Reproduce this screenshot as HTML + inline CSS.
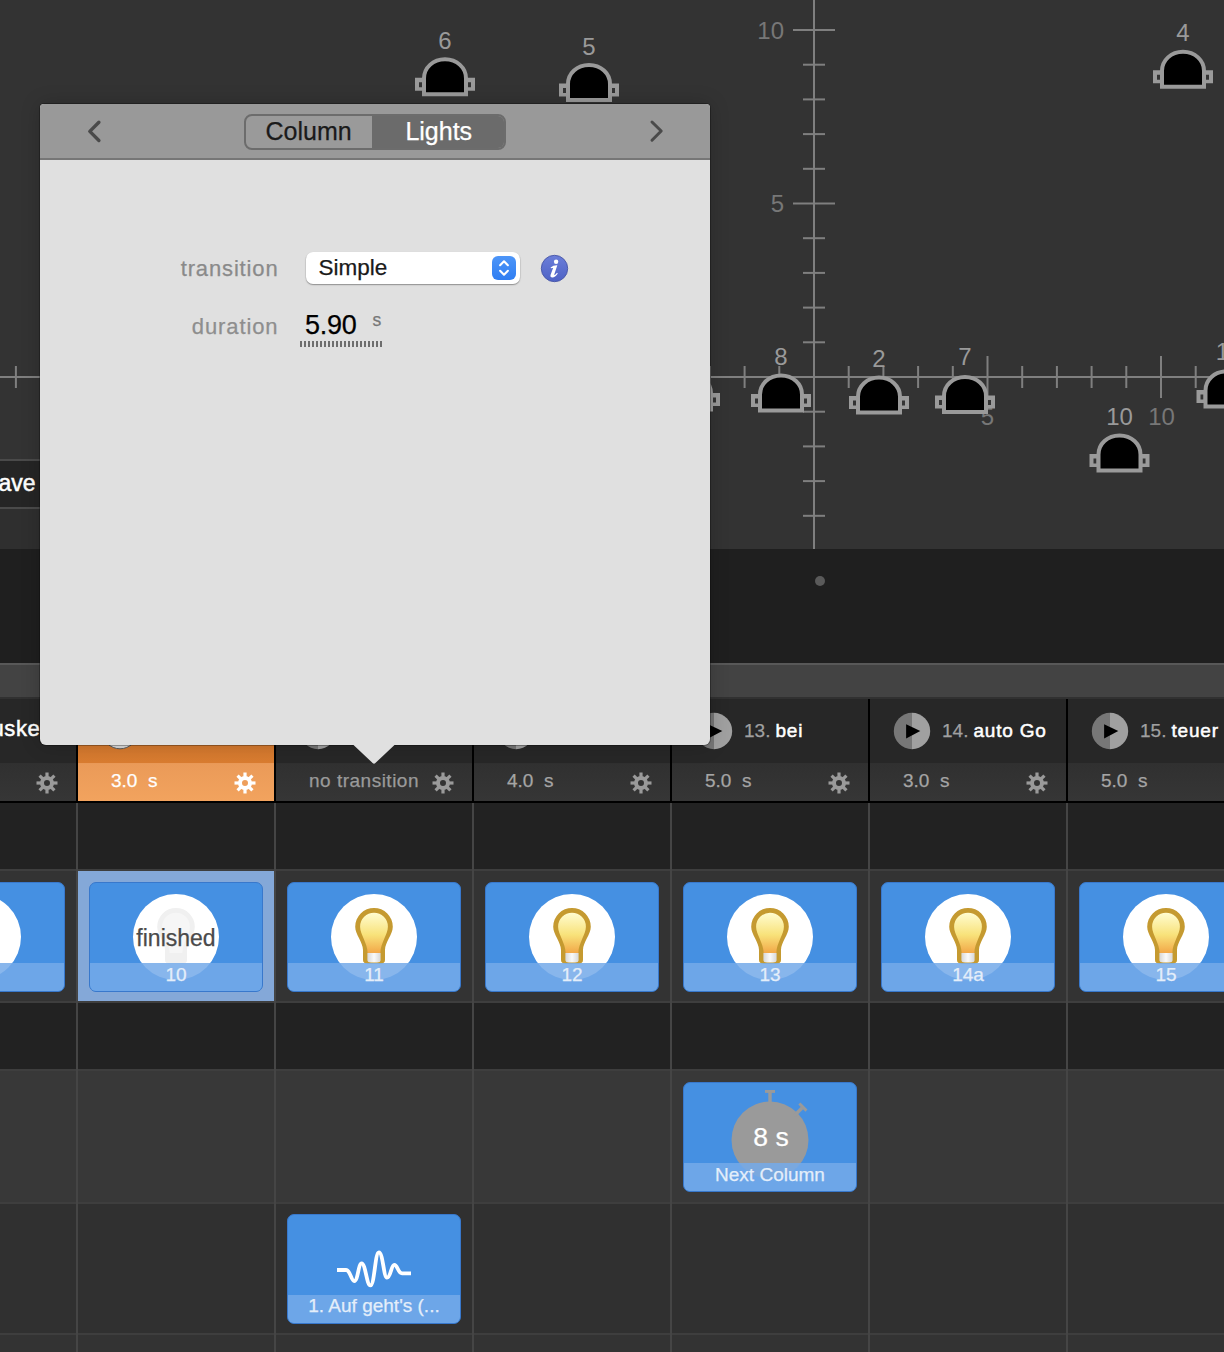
<!DOCTYPE html>
<html><head><meta charset="utf-8">
<style>
*{margin:0;padding:0;box-sizing:border-box}
html,body{width:1224px;height:1352px;overflow:hidden;background:#333;font-family:"Liberation Sans",sans-serif}
.a{position:absolute}
.t{position:absolute;white-space:pre;line-height:1;-webkit-text-stroke-width:0.25px}
</style></head><body>
<div class="a" style="left:0px;top:0px;width:1224px;height:549px;background:#333;"></div><svg class="a" style="left:0;top:0" width="1224" height="549" viewBox="0 0 1224 549"><defs><g id="lamp"><path d="M9 37 L9 21 C9 10.5 18 2 30 2 C42 2 51 10.5 51 21 L51 37 Z" fill="#000" stroke="#9a9a9a" stroke-width="4"/><path fill="#9a9a9a" fill-rule="evenodd" d="M0 20.5 H9 V33.5 H0 Z M4 25 V30 H7 V25 Z M51 20.5 H60 V33.5 H51 Z M53 25 V30 H56 V25 Z"/></g></defs><rect x="813" y="0" width="2" height="549" fill="#7f7f7f"/><rect x="803" y="514.8" width="22" height="2" fill="#7f7f7f"/><rect x="803" y="480.1" width="22" height="2" fill="#7f7f7f"/><rect x="803" y="445.4" width="22" height="2" fill="#7f7f7f"/><rect x="803" y="410.7" width="22" height="2" fill="#7f7f7f"/><rect x="803" y="341.3" width="22" height="2" fill="#7f7f7f"/><rect x="803" y="306.6" width="22" height="2" fill="#7f7f7f"/><rect x="803" y="271.9" width="22" height="2" fill="#7f7f7f"/><rect x="803" y="237.2" width="22" height="2" fill="#7f7f7f"/><rect x="793" y="202.5" width="42" height="2" fill="#7f7f7f"/><rect x="803" y="167.8" width="22" height="2" fill="#7f7f7f"/><rect x="803" y="133.1" width="22" height="2" fill="#7f7f7f"/><rect x="803" y="98.4" width="22" height="2" fill="#7f7f7f"/><rect x="803" y="63.7" width="22" height="2" fill="#7f7f7f"/><rect x="793" y="29.0" width="42" height="2" fill="#7f7f7f"/><rect x="0" y="376" width="1224" height="2" fill="#7f7f7f"/><rect x="14.9" y="366" width="2" height="22" fill="#7f7f7f"/><rect x="49.6" y="366" width="2" height="22" fill="#7f7f7f"/><rect x="84.3" y="366" width="2" height="22" fill="#7f7f7f"/><rect x="119.0" y="356" width="2" height="42" fill="#7f7f7f"/><rect x="153.7" y="366" width="2" height="22" fill="#7f7f7f"/><rect x="188.4" y="366" width="2" height="22" fill="#7f7f7f"/><rect x="223.1" y="366" width="2" height="22" fill="#7f7f7f"/><rect x="257.8" y="366" width="2" height="22" fill="#7f7f7f"/><rect x="292.5" y="356" width="2" height="42" fill="#7f7f7f"/><rect x="327.2" y="366" width="2" height="22" fill="#7f7f7f"/><rect x="361.9" y="366" width="2" height="22" fill="#7f7f7f"/><rect x="396.6" y="366" width="2" height="22" fill="#7f7f7f"/><rect x="431.3" y="366" width="2" height="22" fill="#7f7f7f"/><rect x="466.0" y="356" width="2" height="42" fill="#7f7f7f"/><rect x="500.7" y="366" width="2" height="22" fill="#7f7f7f"/><rect x="535.4" y="366" width="2" height="22" fill="#7f7f7f"/><rect x="570.1" y="366" width="2" height="22" fill="#7f7f7f"/><rect x="604.8" y="366" width="2" height="22" fill="#7f7f7f"/><rect x="639.5" y="356" width="2" height="42" fill="#7f7f7f"/><rect x="674.2" y="366" width="2" height="22" fill="#7f7f7f"/><rect x="708.9" y="366" width="2" height="22" fill="#7f7f7f"/><rect x="743.6" y="366" width="2" height="22" fill="#7f7f7f"/><rect x="778.3" y="366" width="2" height="22" fill="#7f7f7f"/><rect x="847.7" y="366" width="2" height="22" fill="#7f7f7f"/><rect x="882.4" y="366" width="2" height="22" fill="#7f7f7f"/><rect x="917.1" y="366" width="2" height="22" fill="#7f7f7f"/><rect x="951.8" y="366" width="2" height="22" fill="#7f7f7f"/><rect x="986.5" y="356" width="2" height="42" fill="#7f7f7f"/><rect x="1021.2" y="366" width="2" height="22" fill="#7f7f7f"/><rect x="1055.9" y="366" width="2" height="22" fill="#7f7f7f"/><rect x="1090.6" y="366" width="2" height="22" fill="#7f7f7f"/><rect x="1125.3" y="366" width="2" height="22" fill="#7f7f7f"/><rect x="1160.0" y="356" width="2" height="42" fill="#7f7f7f"/><rect x="1194.7" y="366" width="2" height="22" fill="#7f7f7f"/><text x="784" y="39" fill="#777" text-anchor="end" style="font-family:'Liberation Sans',sans-serif;font-size:24px">10</text><text x="784" y="212" fill="#777" text-anchor="end" style="font-family:'Liberation Sans',sans-serif;font-size:24px">5</text><text x="987.5" y="424.5" fill="#777" text-anchor="middle" style="font-family:'Liberation Sans',sans-serif;font-size:24px">5</text><text x="1161.5" y="424.5" fill="#777" text-anchor="middle" style="font-family:'Liberation Sans',sans-serif;font-size:24px">10</text><use href="#lamp" x="415" y="57.3"/><text x="445" y="49.3" fill="#9a9a9a" text-anchor="middle" style="font-family:'Liberation Sans',sans-serif;font-size:24px">6</text><use href="#lamp" x="559" y="63"/><text x="589" y="55.3" fill="#9a9a9a" text-anchor="middle" style="font-family:'Liberation Sans',sans-serif;font-size:24px">5</text><use href="#lamp" x="1153" y="49.8"/><text x="1183" y="41.2" fill="#9a9a9a" text-anchor="middle" style="font-family:'Liberation Sans',sans-serif;font-size:24px">4</text><use href="#lamp" x="751" y="373.5"/><text x="781" y="365" fill="#9a9a9a" text-anchor="middle" style="font-family:'Liberation Sans',sans-serif;font-size:24px">8</text><use href="#lamp" x="849" y="375.6"/><text x="879" y="367" fill="#9a9a9a" text-anchor="middle" style="font-family:'Liberation Sans',sans-serif;font-size:24px">2</text><use href="#lamp" x="935" y="375"/><text x="965" y="365.3" fill="#9a9a9a" text-anchor="middle" style="font-family:'Liberation Sans',sans-serif;font-size:24px">7</text><use href="#lamp" x="1089.5" y="433.5"/><text x="1119.5" y="425" fill="#9a9a9a" text-anchor="middle" style="font-family:'Liberation Sans',sans-serif;font-size:24px">10</text><use href="#lamp" x="1196.5" y="369.4"/><text x="1222.5" y="360.3" fill="#9a9a9a" text-anchor="middle" style="font-family:'Liberation Sans',sans-serif;font-size:24px">1</text><use href="#lamp" x="660" y="372.5"/></svg><div class="a" style="left:0px;top:459px;width:40px;height:2px;background:#4a4a4a;"></div><div class="a" style="left:0px;top:461px;width:40px;height:46px;background:#252525;"></div><div class="a" style="left:0px;top:507px;width:40px;height:2px;background:#4a4a4a;"></div><div class="a" style="left:0px;top:509px;width:40px;height:40px;background:#2f2f2f;"></div><div class="t" style="left:-1.5px;top:471.5px;font-size:23px;color:#fff;-webkit-text-stroke:0.5px #fff">ave</div><div class="a" style="left:0px;top:549px;width:1224px;height:114px;background:#1f1f1f;"></div><div class="a" style="left:815px;top:576px;width:10px;height:10px;background:#5a5a5a;border-radius:50%"></div><div class="a" style="left:0px;top:663px;width:1224px;height:2px;background:#585858;"></div><div class="a" style="left:0px;top:665px;width:1224px;height:32px;background:#434343;"></div><div class="a" style="left:0px;top:697px;width:1224px;height:2px;background:#313131;"></div><div class="a" style="left:0px;top:699px;width:1224px;height:64px;background:#272727;"></div><div class="a" style="left:0px;top:763px;width:1224px;height:38px;background:linear-gradient(#303030,#363636);"></div><div class="a" style="left:0px;top:801px;width:1224px;height:2px;background:#000;"></div><div class="a" style="left:0px;top:803px;width:1224px;height:66px;background:#222;"></div><div class="a" style="left:0px;top:871px;width:1224px;height:130px;background:#333;"></div><div class="a" style="left:0px;top:1003px;width:1224px;height:66px;background:#222;"></div><div class="a" style="left:0px;top:1071px;width:1224px;height:131px;background:#383838;"></div><div class="a" style="left:0px;top:1204px;width:1224px;height:129px;background:#303030;"></div><div class="a" style="left:0px;top:1335px;width:1224px;height:17px;background:#333;"></div><div class="a" style="left:0px;top:869px;width:1224px;height:2px;background:#3e3e3e;"></div><div class="a" style="left:0px;top:1001px;width:1224px;height:2px;background:#3e3e3e;"></div><div class="a" style="left:0px;top:1069px;width:1224px;height:2px;background:#3e3e3e;"></div><div class="a" style="left:0px;top:1202px;width:1224px;height:2px;background:#3e3e3e;"></div><div class="a" style="left:0px;top:1333px;width:1224px;height:2px;background:#3e3e3e;"></div><div class="a" style="left:76px;top:699px;width:2px;height:102px;background:#000;"></div><div class="a" style="left:76px;top:803px;width:2px;height:549px;background:#454545;"></div><div class="a" style="left:274px;top:699px;width:2px;height:102px;background:#000;"></div><div class="a" style="left:274px;top:803px;width:2px;height:549px;background:#454545;"></div><div class="a" style="left:472px;top:699px;width:2px;height:102px;background:#000;"></div><div class="a" style="left:472px;top:803px;width:2px;height:549px;background:#454545;"></div><div class="a" style="left:670px;top:699px;width:2px;height:102px;background:#000;"></div><div class="a" style="left:670px;top:803px;width:2px;height:549px;background:#454545;"></div><div class="a" style="left:868px;top:699px;width:2px;height:102px;background:#000;"></div><div class="a" style="left:868px;top:803px;width:2px;height:549px;background:#454545;"></div><div class="a" style="left:1066px;top:699px;width:2px;height:102px;background:#000;"></div><div class="a" style="left:1066px;top:803px;width:2px;height:549px;background:#454545;"></div><div class="a" style="left:78px;top:698px;width:196px;height:65px;background:linear-gradient(#cf742a,#d97c30);"></div><div class="a" style="left:78px;top:763px;width:196px;height:38px;background:linear-gradient(#ea9a58,#f2a35e);"></div><svg class="a" style="left:-97px;top:711.5px" width="38" height="38" viewBox="-19 -19 38 38"><clipPath id="pc-78"><circle r="18.2"/></clipPath><g clip-path="url(#pc-78)"><rect x="-19" y="-19" width="19" height="38" fill="#777"/><rect x="0" y="-19" width="19" height="38" fill="#a0a0a0"/></g><path d="M-5.9 -6.8 L8.3 0 L-5.9 7.5 Z" fill="#000"/></svg><svg class="a" style="left:35px;top:770.5px" width="24" height="24" viewBox="-12 -12 24 24"><g fill="#9a9a9a"><rect x="-1.6" y="-10.5" width="3.2" height="5" transform="rotate(0)"/><rect x="-1.6" y="-10.5" width="3.2" height="5" transform="rotate(45)"/><rect x="-1.6" y="-10.5" width="3.2" height="5" transform="rotate(90)"/><rect x="-1.6" y="-10.5" width="3.2" height="5" transform="rotate(135)"/><rect x="-1.6" y="-10.5" width="3.2" height="5" transform="rotate(180)"/><rect x="-1.6" y="-10.5" width="3.2" height="5" transform="rotate(225)"/><rect x="-1.6" y="-10.5" width="3.2" height="5" transform="rotate(270)"/><rect x="-1.6" y="-10.5" width="3.2" height="5" transform="rotate(315)"/></g><circle r="5" fill="none" stroke="#9a9a9a" stroke-width="4"/></svg><svg class="a" style="left:101px;top:711.5px" width="38" height="38" viewBox="-19 -19 38 38"><circle r="17.8" fill="#dadada" stroke="#5a5a5a" stroke-width="1"/></svg><div class="t" style="left:111px;top:770.85px;font-size:19px;font-weight:400;color:#fff;letter-spacing:0px;">3.0  s</div><svg class="a" style="left:233px;top:770.5px" width="24" height="24" viewBox="-12 -12 24 24"><g fill="#fff"><rect x="-1.6" y="-10.5" width="3.2" height="5" transform="rotate(0)"/><rect x="-1.6" y="-10.5" width="3.2" height="5" transform="rotate(45)"/><rect x="-1.6" y="-10.5" width="3.2" height="5" transform="rotate(90)"/><rect x="-1.6" y="-10.5" width="3.2" height="5" transform="rotate(135)"/><rect x="-1.6" y="-10.5" width="3.2" height="5" transform="rotate(180)"/><rect x="-1.6" y="-10.5" width="3.2" height="5" transform="rotate(225)"/><rect x="-1.6" y="-10.5" width="3.2" height="5" transform="rotate(270)"/><rect x="-1.6" y="-10.5" width="3.2" height="5" transform="rotate(315)"/></g><circle r="5" fill="none" stroke="#fff" stroke-width="4"/></svg><svg class="a" style="left:299px;top:711.5px" width="38" height="38" viewBox="-19 -19 38 38"><clipPath id="pc318"><circle r="18.2"/></clipPath><g clip-path="url(#pc318)"><rect x="-19" y="-19" width="19" height="38" fill="#777"/><rect x="0" y="-19" width="19" height="38" fill="#a0a0a0"/></g><path d="M-5.9 -6.8 L8.3 0 L-5.9 7.5 Z" fill="#000"/></svg><div class="t" style="left:309px;top:770.85px;font-size:19px;font-weight:400;color:#9a9a9a;letter-spacing:0.5px;">no transition</div><svg class="a" style="left:431px;top:770.5px" width="24" height="24" viewBox="-12 -12 24 24"><g fill="#9a9a9a"><rect x="-1.6" y="-10.5" width="3.2" height="5" transform="rotate(0)"/><rect x="-1.6" y="-10.5" width="3.2" height="5" transform="rotate(45)"/><rect x="-1.6" y="-10.5" width="3.2" height="5" transform="rotate(90)"/><rect x="-1.6" y="-10.5" width="3.2" height="5" transform="rotate(135)"/><rect x="-1.6" y="-10.5" width="3.2" height="5" transform="rotate(180)"/><rect x="-1.6" y="-10.5" width="3.2" height="5" transform="rotate(225)"/><rect x="-1.6" y="-10.5" width="3.2" height="5" transform="rotate(270)"/><rect x="-1.6" y="-10.5" width="3.2" height="5" transform="rotate(315)"/></g><circle r="5" fill="none" stroke="#9a9a9a" stroke-width="4"/></svg><svg class="a" style="left:497px;top:711.5px" width="38" height="38" viewBox="-19 -19 38 38"><clipPath id="pc516"><circle r="18.2"/></clipPath><g clip-path="url(#pc516)"><rect x="-19" y="-19" width="19" height="38" fill="#777"/><rect x="0" y="-19" width="19" height="38" fill="#a0a0a0"/></g><path d="M-5.9 -6.8 L8.3 0 L-5.9 7.5 Z" fill="#000"/></svg><div class="t" style="left:507px;top:770.85px;font-size:19px;font-weight:400;color:#a5a5a5;letter-spacing:0px;">4.0  s</div><svg class="a" style="left:629px;top:770.5px" width="24" height="24" viewBox="-12 -12 24 24"><g fill="#9a9a9a"><rect x="-1.6" y="-10.5" width="3.2" height="5" transform="rotate(0)"/><rect x="-1.6" y="-10.5" width="3.2" height="5" transform="rotate(45)"/><rect x="-1.6" y="-10.5" width="3.2" height="5" transform="rotate(90)"/><rect x="-1.6" y="-10.5" width="3.2" height="5" transform="rotate(135)"/><rect x="-1.6" y="-10.5" width="3.2" height="5" transform="rotate(180)"/><rect x="-1.6" y="-10.5" width="3.2" height="5" transform="rotate(225)"/><rect x="-1.6" y="-10.5" width="3.2" height="5" transform="rotate(270)"/><rect x="-1.6" y="-10.5" width="3.2" height="5" transform="rotate(315)"/></g><circle r="5" fill="none" stroke="#9a9a9a" stroke-width="4"/></svg><svg class="a" style="left:695px;top:711.5px" width="38" height="38" viewBox="-19 -19 38 38"><clipPath id="pc714"><circle r="18.2"/></clipPath><g clip-path="url(#pc714)"><rect x="-19" y="-19" width="19" height="38" fill="#777"/><rect x="0" y="-19" width="19" height="38" fill="#a0a0a0"/></g><path d="M-5.9 -6.8 L8.3 0 L-5.9 7.5 Z" fill="#000"/></svg><div class="t" style="left:744px;top:720.85px;font-size:19px;font-weight:400;color:#a0a0a0;letter-spacing:0px;">13. </div><div class="t" style="left:775.5px;top:720.85px;font-size:19px;font-weight:400;color:#fff;letter-spacing:0.8px;-webkit-text-stroke:0.5px #fff">bei</div><div class="t" style="left:705px;top:770.85px;font-size:19px;font-weight:400;color:#a5a5a5;letter-spacing:0px;">5.0  s</div><svg class="a" style="left:827px;top:770.5px" width="24" height="24" viewBox="-12 -12 24 24"><g fill="#9a9a9a"><rect x="-1.6" y="-10.5" width="3.2" height="5" transform="rotate(0)"/><rect x="-1.6" y="-10.5" width="3.2" height="5" transform="rotate(45)"/><rect x="-1.6" y="-10.5" width="3.2" height="5" transform="rotate(90)"/><rect x="-1.6" y="-10.5" width="3.2" height="5" transform="rotate(135)"/><rect x="-1.6" y="-10.5" width="3.2" height="5" transform="rotate(180)"/><rect x="-1.6" y="-10.5" width="3.2" height="5" transform="rotate(225)"/><rect x="-1.6" y="-10.5" width="3.2" height="5" transform="rotate(270)"/><rect x="-1.6" y="-10.5" width="3.2" height="5" transform="rotate(315)"/></g><circle r="5" fill="none" stroke="#9a9a9a" stroke-width="4"/></svg><svg class="a" style="left:893px;top:711.5px" width="38" height="38" viewBox="-19 -19 38 38"><clipPath id="pc912"><circle r="18.2"/></clipPath><g clip-path="url(#pc912)"><rect x="-19" y="-19" width="19" height="38" fill="#777"/><rect x="0" y="-19" width="19" height="38" fill="#a0a0a0"/></g><path d="M-5.9 -6.8 L8.3 0 L-5.9 7.5 Z" fill="#000"/></svg><div class="t" style="left:942px;top:720.85px;font-size:19px;font-weight:400;color:#a0a0a0;letter-spacing:0px;">14. </div><div class="t" style="left:973.5px;top:720.85px;font-size:19px;font-weight:400;color:#fff;letter-spacing:0.8px;-webkit-text-stroke:0.5px #fff">auto Go</div><div class="t" style="left:903px;top:770.85px;font-size:19px;font-weight:400;color:#a5a5a5;letter-spacing:0px;">3.0  s</div><svg class="a" style="left:1025px;top:770.5px" width="24" height="24" viewBox="-12 -12 24 24"><g fill="#9a9a9a"><rect x="-1.6" y="-10.5" width="3.2" height="5" transform="rotate(0)"/><rect x="-1.6" y="-10.5" width="3.2" height="5" transform="rotate(45)"/><rect x="-1.6" y="-10.5" width="3.2" height="5" transform="rotate(90)"/><rect x="-1.6" y="-10.5" width="3.2" height="5" transform="rotate(135)"/><rect x="-1.6" y="-10.5" width="3.2" height="5" transform="rotate(180)"/><rect x="-1.6" y="-10.5" width="3.2" height="5" transform="rotate(225)"/><rect x="-1.6" y="-10.5" width="3.2" height="5" transform="rotate(270)"/><rect x="-1.6" y="-10.5" width="3.2" height="5" transform="rotate(315)"/></g><circle r="5" fill="none" stroke="#9a9a9a" stroke-width="4"/></svg><svg class="a" style="left:1091px;top:711.5px" width="38" height="38" viewBox="-19 -19 38 38"><clipPath id="pc1110"><circle r="18.2"/></clipPath><g clip-path="url(#pc1110)"><rect x="-19" y="-19" width="19" height="38" fill="#777"/><rect x="0" y="-19" width="19" height="38" fill="#a0a0a0"/></g><path d="M-5.9 -6.8 L8.3 0 L-5.9 7.5 Z" fill="#000"/></svg><div class="t" style="left:1140px;top:720.85px;font-size:19px;font-weight:400;color:#a0a0a0;letter-spacing:0px;">15. </div><div class="t" style="left:1171.5px;top:720.85px;font-size:19px;font-weight:400;color:#fff;letter-spacing:0.8px;-webkit-text-stroke:0.5px #fff">teuer</div><div class="t" style="left:1101px;top:770.85px;font-size:19px;font-weight:400;color:#a5a5a5;letter-spacing:0px;">5.0  s</div><svg class="a" style="left:1223px;top:770.5px" width="24" height="24" viewBox="-12 -12 24 24"><g fill="#9a9a9a"><rect x="-1.6" y="-10.5" width="3.2" height="5" transform="rotate(0)"/><rect x="-1.6" y="-10.5" width="3.2" height="5" transform="rotate(45)"/><rect x="-1.6" y="-10.5" width="3.2" height="5" transform="rotate(90)"/><rect x="-1.6" y="-10.5" width="3.2" height="5" transform="rotate(135)"/><rect x="-1.6" y="-10.5" width="3.2" height="5" transform="rotate(180)"/><rect x="-1.6" y="-10.5" width="3.2" height="5" transform="rotate(225)"/><rect x="-1.6" y="-10.5" width="3.2" height="5" transform="rotate(270)"/><rect x="-1.6" y="-10.5" width="3.2" height="5" transform="rotate(315)"/></g><circle r="5" fill="none" stroke="#9a9a9a" stroke-width="4"/></svg><div class="t" style="left:-8.5px;top:718.30px;font-size:22px;font-weight:400;color:#fff;letter-spacing:0.6px;-webkit-text-stroke:0.5px #fff">uske</div><div class="a" style="left:78px;top:871px;width:196px;height:130px;background:#84a8d8;"></div><div class="a" style="left:-109px;top:882px;width:174px;height:110px;border-radius:7px;background:#4590e2;border:1px solid #3878cc;overflow:hidden"><div class="a" style="left:43px;top:11px;width:86px;height:86px;border-radius:50%;background:#fff"></div><svg class="a" style="left:56px;top:20px" width="60" height="70" viewBox="-30 -35 60 70"><defs><linearGradient id="bg0" x1="0" y1="0" x2="0" y2="1"><stop offset="0" stop-color="#fffcd0"/><stop offset="0.55" stop-color="#f8e27a"/><stop offset="1" stop-color="#f2a848"/></linearGradient><linearGradient id="bb0" x1="0" y1="0" x2="1" y2="0"><stop offset="0" stop-color="#d8d8d8"/><stop offset="0.5" stop-color="#fafafa"/><stop offset="1" stop-color="#d8d8d8"/></linearGradient></defs><path d="M-11 22 L-11 12 C-11 4 -18.8 -3.5 -18.8 -11.3 A18.8 18.8 0 0 1 18.8 -11.3 C18.8 -3.5 11 4 11 12 L11 22 Q11 25.8 6 25.8 L-6 25.8 Q-11 25.8 -11 22 Z" fill="#c59a30"/><path d="M-6.4 15 C-6.4 5 -13.9 -3.5 -13.9 -11.3 A13.9 13.9 0 0 1 13.9 -11.3 C13.9 -3.5 6.4 5 6.4 15 Z" fill="url(#bg0)"/><path d="M-6.6 15 H6.6 V22 Q6.6 24.5 3 24.5 H-3 Q-6.6 24.5 -6.6 22 Z" fill="url(#bb0)"/></svg><div class="a" style="left:0;bottom:0;width:174px;height:28px;background:rgba(116,170,233,0.86)"></div><div class="t" style="left:-1px;width:174px;text-align:center;top:81.85px;font-size:19px;color:#e4eefa">9</div></div><div class="a" style="left:89px;top:882px;width:174px;height:110px;border-radius:7px;background:#4590e2;border:1px solid #3878cc;overflow:hidden"><div class="a" style="left:43px;top:11px;width:86px;height:86px;border-radius:50%;background:#fff"></div><svg class="a" style="left:56px;top:20px" width="60" height="70" viewBox="-30 -35 60 70"><path d="M-11 22 L-11 12 C-11 4 -18.8 -3.5 -18.8 -11.3 A18.8 18.8 0 0 1 18.8 -11.3 C18.8 -3.5 11 4 11 12 L11 22 Q11 25.8 6 25.8 L-6 25.8 Q-11 25.8 -11 22 Z" fill="#f0f0f0"/><path d="M-6.4 15 C-6.4 5 -13.9 -3.5 -13.9 -11.3 A13.9 13.9 0 0 1 13.9 -11.3 C13.9 -3.5 6.4 5 6.4 15 Z" fill="#f6f6f6"/></svg><div class="t" style="left:-1px;width:174px;text-align:center;top:43.95px;font-size:23px;color:#4a4a4a">finished</div><div class="a" style="left:0;bottom:0;width:174px;height:28px;background:rgba(116,170,233,0.86)"></div><div class="t" style="left:-1px;width:174px;text-align:center;top:81.85px;font-size:19px;color:#e4eefa">10</div></div><div class="a" style="left:287px;top:882px;width:174px;height:110px;border-radius:7px;background:#4590e2;border:1px solid #3878cc;overflow:hidden"><div class="a" style="left:43px;top:11px;width:86px;height:86px;border-radius:50%;background:#fff"></div><svg class="a" style="left:56px;top:20px" width="60" height="70" viewBox="-30 -35 60 70"><defs><linearGradient id="bg2" x1="0" y1="0" x2="0" y2="1"><stop offset="0" stop-color="#fffcd0"/><stop offset="0.55" stop-color="#f8e27a"/><stop offset="1" stop-color="#f2a848"/></linearGradient><linearGradient id="bb2" x1="0" y1="0" x2="1" y2="0"><stop offset="0" stop-color="#d8d8d8"/><stop offset="0.5" stop-color="#fafafa"/><stop offset="1" stop-color="#d8d8d8"/></linearGradient></defs><path d="M-11 22 L-11 12 C-11 4 -18.8 -3.5 -18.8 -11.3 A18.8 18.8 0 0 1 18.8 -11.3 C18.8 -3.5 11 4 11 12 L11 22 Q11 25.8 6 25.8 L-6 25.8 Q-11 25.8 -11 22 Z" fill="#c59a30"/><path d="M-6.4 15 C-6.4 5 -13.9 -3.5 -13.9 -11.3 A13.9 13.9 0 0 1 13.9 -11.3 C13.9 -3.5 6.4 5 6.4 15 Z" fill="url(#bg2)"/><path d="M-6.6 15 H6.6 V22 Q6.6 24.5 3 24.5 H-3 Q-6.6 24.5 -6.6 22 Z" fill="url(#bb2)"/></svg><div class="a" style="left:0;bottom:0;width:174px;height:28px;background:rgba(116,170,233,0.86)"></div><div class="t" style="left:-1px;width:174px;text-align:center;top:81.85px;font-size:19px;color:#e4eefa">11</div></div><div class="a" style="left:485px;top:882px;width:174px;height:110px;border-radius:7px;background:#4590e2;border:1px solid #3878cc;overflow:hidden"><div class="a" style="left:43px;top:11px;width:86px;height:86px;border-radius:50%;background:#fff"></div><svg class="a" style="left:56px;top:20px" width="60" height="70" viewBox="-30 -35 60 70"><defs><linearGradient id="bg3" x1="0" y1="0" x2="0" y2="1"><stop offset="0" stop-color="#fffcd0"/><stop offset="0.55" stop-color="#f8e27a"/><stop offset="1" stop-color="#f2a848"/></linearGradient><linearGradient id="bb3" x1="0" y1="0" x2="1" y2="0"><stop offset="0" stop-color="#d8d8d8"/><stop offset="0.5" stop-color="#fafafa"/><stop offset="1" stop-color="#d8d8d8"/></linearGradient></defs><path d="M-11 22 L-11 12 C-11 4 -18.8 -3.5 -18.8 -11.3 A18.8 18.8 0 0 1 18.8 -11.3 C18.8 -3.5 11 4 11 12 L11 22 Q11 25.8 6 25.8 L-6 25.8 Q-11 25.8 -11 22 Z" fill="#c59a30"/><path d="M-6.4 15 C-6.4 5 -13.9 -3.5 -13.9 -11.3 A13.9 13.9 0 0 1 13.9 -11.3 C13.9 -3.5 6.4 5 6.4 15 Z" fill="url(#bg3)"/><path d="M-6.6 15 H6.6 V22 Q6.6 24.5 3 24.5 H-3 Q-6.6 24.5 -6.6 22 Z" fill="url(#bb3)"/></svg><div class="a" style="left:0;bottom:0;width:174px;height:28px;background:rgba(116,170,233,0.86)"></div><div class="t" style="left:-1px;width:174px;text-align:center;top:81.85px;font-size:19px;color:#e4eefa">12</div></div><div class="a" style="left:683px;top:882px;width:174px;height:110px;border-radius:7px;background:#4590e2;border:1px solid #3878cc;overflow:hidden"><div class="a" style="left:43px;top:11px;width:86px;height:86px;border-radius:50%;background:#fff"></div><svg class="a" style="left:56px;top:20px" width="60" height="70" viewBox="-30 -35 60 70"><defs><linearGradient id="bg4" x1="0" y1="0" x2="0" y2="1"><stop offset="0" stop-color="#fffcd0"/><stop offset="0.55" stop-color="#f8e27a"/><stop offset="1" stop-color="#f2a848"/></linearGradient><linearGradient id="bb4" x1="0" y1="0" x2="1" y2="0"><stop offset="0" stop-color="#d8d8d8"/><stop offset="0.5" stop-color="#fafafa"/><stop offset="1" stop-color="#d8d8d8"/></linearGradient></defs><path d="M-11 22 L-11 12 C-11 4 -18.8 -3.5 -18.8 -11.3 A18.8 18.8 0 0 1 18.8 -11.3 C18.8 -3.5 11 4 11 12 L11 22 Q11 25.8 6 25.8 L-6 25.8 Q-11 25.8 -11 22 Z" fill="#c59a30"/><path d="M-6.4 15 C-6.4 5 -13.9 -3.5 -13.9 -11.3 A13.9 13.9 0 0 1 13.9 -11.3 C13.9 -3.5 6.4 5 6.4 15 Z" fill="url(#bg4)"/><path d="M-6.6 15 H6.6 V22 Q6.6 24.5 3 24.5 H-3 Q-6.6 24.5 -6.6 22 Z" fill="url(#bb4)"/></svg><div class="a" style="left:0;bottom:0;width:174px;height:28px;background:rgba(116,170,233,0.86)"></div><div class="t" style="left:-1px;width:174px;text-align:center;top:81.85px;font-size:19px;color:#e4eefa">13</div></div><div class="a" style="left:881px;top:882px;width:174px;height:110px;border-radius:7px;background:#4590e2;border:1px solid #3878cc;overflow:hidden"><div class="a" style="left:43px;top:11px;width:86px;height:86px;border-radius:50%;background:#fff"></div><svg class="a" style="left:56px;top:20px" width="60" height="70" viewBox="-30 -35 60 70"><defs><linearGradient id="bg5" x1="0" y1="0" x2="0" y2="1"><stop offset="0" stop-color="#fffcd0"/><stop offset="0.55" stop-color="#f8e27a"/><stop offset="1" stop-color="#f2a848"/></linearGradient><linearGradient id="bb5" x1="0" y1="0" x2="1" y2="0"><stop offset="0" stop-color="#d8d8d8"/><stop offset="0.5" stop-color="#fafafa"/><stop offset="1" stop-color="#d8d8d8"/></linearGradient></defs><path d="M-11 22 L-11 12 C-11 4 -18.8 -3.5 -18.8 -11.3 A18.8 18.8 0 0 1 18.8 -11.3 C18.8 -3.5 11 4 11 12 L11 22 Q11 25.8 6 25.8 L-6 25.8 Q-11 25.8 -11 22 Z" fill="#c59a30"/><path d="M-6.4 15 C-6.4 5 -13.9 -3.5 -13.9 -11.3 A13.9 13.9 0 0 1 13.9 -11.3 C13.9 -3.5 6.4 5 6.4 15 Z" fill="url(#bg5)"/><path d="M-6.6 15 H6.6 V22 Q6.6 24.5 3 24.5 H-3 Q-6.6 24.5 -6.6 22 Z" fill="url(#bb5)"/></svg><div class="a" style="left:0;bottom:0;width:174px;height:28px;background:rgba(116,170,233,0.86)"></div><div class="t" style="left:-1px;width:174px;text-align:center;top:81.85px;font-size:19px;color:#e4eefa">14a</div></div><div class="a" style="left:1079px;top:882px;width:174px;height:110px;border-radius:7px;background:#4590e2;border:1px solid #3878cc;overflow:hidden"><div class="a" style="left:43px;top:11px;width:86px;height:86px;border-radius:50%;background:#fff"></div><svg class="a" style="left:56px;top:20px" width="60" height="70" viewBox="-30 -35 60 70"><defs><linearGradient id="bg6" x1="0" y1="0" x2="0" y2="1"><stop offset="0" stop-color="#fffcd0"/><stop offset="0.55" stop-color="#f8e27a"/><stop offset="1" stop-color="#f2a848"/></linearGradient><linearGradient id="bb6" x1="0" y1="0" x2="1" y2="0"><stop offset="0" stop-color="#d8d8d8"/><stop offset="0.5" stop-color="#fafafa"/><stop offset="1" stop-color="#d8d8d8"/></linearGradient></defs><path d="M-11 22 L-11 12 C-11 4 -18.8 -3.5 -18.8 -11.3 A18.8 18.8 0 0 1 18.8 -11.3 C18.8 -3.5 11 4 11 12 L11 22 Q11 25.8 6 25.8 L-6 25.8 Q-11 25.8 -11 22 Z" fill="#c59a30"/><path d="M-6.4 15 C-6.4 5 -13.9 -3.5 -13.9 -11.3 A13.9 13.9 0 0 1 13.9 -11.3 C13.9 -3.5 6.4 5 6.4 15 Z" fill="url(#bg6)"/><path d="M-6.6 15 H6.6 V22 Q6.6 24.5 3 24.5 H-3 Q-6.6 24.5 -6.6 22 Z" fill="url(#bb6)"/></svg><div class="a" style="left:0;bottom:0;width:174px;height:28px;background:rgba(116,170,233,0.86)"></div><div class="t" style="left:-1px;width:174px;text-align:center;top:81.85px;font-size:19px;color:#e4eefa">15</div></div><div class="a" style="left:683px;top:1082px;width:174px;height:110px;border-radius:7px;background:#4590e2;border:1px solid #3878cc;overflow:hidden"><svg class="a" style="left:36px;top:-1px" width="100" height="100" viewBox="-50 -50 100 100"><g fill="#9a9a9a"><circle cx="0" cy="8" r="38.5"/><rect x="-1.7" y="-41" width="3.4" height="13"/><rect x="-5" y="-42" width="10" height="2.9"/><g transform="translate(0 8) rotate(45)"><rect x="-1.7" y="-47" width="3.4" height="13"/><rect x="-5" y="-48" width="10" height="2.9"/></g></g></svg><div class="t" style="left:0;width:174px;text-align:center;top:41.48px;font-size:26.5px;color:#fff">8 s</div><div class="a" style="left:0;bottom:0;width:174px;height:28px;background:rgba(116,170,233,0.86)"></div><div class="t" style="left:-1px;width:174px;text-align:center;top:81.85px;font-size:19px;color:#e4eefa">Next Column</div></div><div class="a" style="left:287px;top:1214px;width:174px;height:110px;border-radius:7px;background:#4590e2;border:1px solid #3878cc;overflow:hidden"><svg class="a" style="left:0;top:0" width="172" height="108" viewBox="288 1215 172 108"><path d="M337 1270 H346 C350.5 1270 351 1281 354.3 1281 C358 1281 358.3 1263.4 361.6 1263.4 C365.6 1263.4 366.6 1285.4 370.4 1285.4 C374.6 1285.4 375 1252.4 378.9 1252.4 C383 1252.4 383.6 1277.7 387 1277.7 C390.6 1277.7 391.2 1264.9 394.3 1264.9 C397.6 1264.9 398 1273.3 402 1273.3 H411" fill="none" stroke="#fff" stroke-width="3.8" stroke-linecap="butt" stroke-linejoin="round"/></svg><div class="a" style="left:0;bottom:0;width:174px;height:28px;background:rgba(116,170,233,0.86)"></div><div class="t" style="left:-1px;width:174px;text-align:center;top:81.45px;font-size:19px;color:#e4eefa">1. Auf geht's (...</div></div><div class="a" style="left:40px;top:104px;width:670px;height:641px;border-radius:4px 4px 6px 6px;box-shadow:0 0 0 1px rgba(0,0,0,0.28),0 0 20px rgba(0,0,0,0.2)"></div><svg class="a" style="left:340px;top:740px" width="70" height="30" viewBox="340 740 70 30"><path d="M353.5 745 L372.6 763.1 Q374 764.4 375.4 763.1 L394.5 745 Z" fill="#e0e0e0"/></svg><div class="a" style="left:40px;top:104px;width:670px;height:641px;border-radius:4px 4px 6px 6px;background:#e0e0e0;overflow:hidden"><div class="a" style="left:0;top:0;width:670px;height:54px;background:#999"></div><div class="a" style="left:0;top:54px;width:670px;height:2px;background:#767676"></div></div><svg class="a" style="left:0;top:0" width="720" height="160" viewBox="0 0 720 160"><path d="M98.9 122.3 L89.8 131.4 L98.9 140.5" fill="none" stroke="#4a4a4a" stroke-width="3.4" stroke-linecap="round" stroke-linejoin="round"/><path d="M652 122 L661.2 131 L652 140.2" fill="none" stroke="#4a4a4a" stroke-width="3" stroke-linecap="round" stroke-linejoin="round"/></svg><div class="a" style="left:244px;top:114px;width:262px;height:36px;border-radius:8px;border:2px solid #6c6c6c;background:#9a9a9a;overflow:hidden"><div class="a" style="left:126px;top:0;width:134px;height:32px;background:#6b6b6b"></div></div><div class="t" style="left:265.5px;top:118.55px;font-size:25px;font-weight:400;color:#1a1a1a;letter-spacing:0px;">Column</div><div class="t" style="left:405.4px;top:118.55px;font-size:25px;font-weight:400;color:#fff;letter-spacing:0px;">Lights</div><div class="t" style="left:100px;width:178.5px;text-align:right;top:257.60px;font-size:22px;color:#8a8a8a;letter-spacing:0.85px">transition</div><div class="t" style="left:100px;width:178.5px;text-align:right;top:315.60px;font-size:22px;color:#8e8e8e;letter-spacing:0.9px">duration</div><div class="a" style="left:306px;top:252px;width:214px;height:32px;border-radius:7px;background:#fff;box-shadow:0 0.5px 0 0.5px rgba(0,0,0,0.08),0 1px 1.5px rgba(0,0,0,0.3)"></div><div class="t" style="left:318.5px;top:257.48px;font-size:22.5px;font-weight:400;color:#1a1a1a;letter-spacing:0px;">Simple</div><svg class="a" style="left:492px;top:256px" width="24" height="24" viewBox="0 0 24 24"><defs><linearGradient id="stg" x1="0" y1="0" x2="0" y2="1"><stop offset="0" stop-color="#4d95f8"/><stop offset="1" stop-color="#2f7ef2"/></linearGradient></defs><rect x="0" y="0" width="24" height="24" rx="6" fill="url(#stg)"/><path d="M8.1 9.2 L12 5.3 L15.9 9.2 M8.1 14.8 L12 18.7 L15.9 14.8" fill="none" stroke="#fff" stroke-width="2.1" stroke-linecap="round" stroke-linejoin="round"/></svg><svg class="a" style="left:539px;top:253px" width="31" height="31" viewBox="-15.5 -15.5 31 31"><defs><linearGradient id="ig" x1="0" y1="0" x2="0" y2="1"><stop offset="0" stop-color="#6b7ed9"/><stop offset="1" stop-color="#4e62c5"/></linearGradient></defs><circle r="13.2" fill="url(#ig)" stroke="#4756a6" stroke-width="0.9"/><circle cx="1.6" cy="-6.7" r="2.2" fill="#fff"/><path d="M-3.9 -1.0 Q-1 -3.4 2.8 -3.2 L-0.3 6.3 Q0.4 6.8 2.5 4.2 L3.3 5.0 Q0.6 9.0 -2.1 9.1 Q-4.7 8.9 -3.9 6.3 L-1.4 -0.5 Q-2.5 -0.8 -3.5 -0.2 Z" fill="#fff"/></svg><div class="t" style="left:305px;top:312.35px;font-size:27px;font-weight:400;color:#000;letter-spacing:-0.3px;">5.90</div><div class="t" style="left:372.5px;top:312.23px;font-size:17.5px;font-weight:400;color:#777;letter-spacing:0px;">s</div><div class="a" style="left:299.8px;top:341px;width:82px;height:6px;background:repeating-linear-gradient(90deg,#6e6e6e 0,#6e6e6e 1.7px,transparent 1.7px,transparent 4px)"></div>
</body></html>
